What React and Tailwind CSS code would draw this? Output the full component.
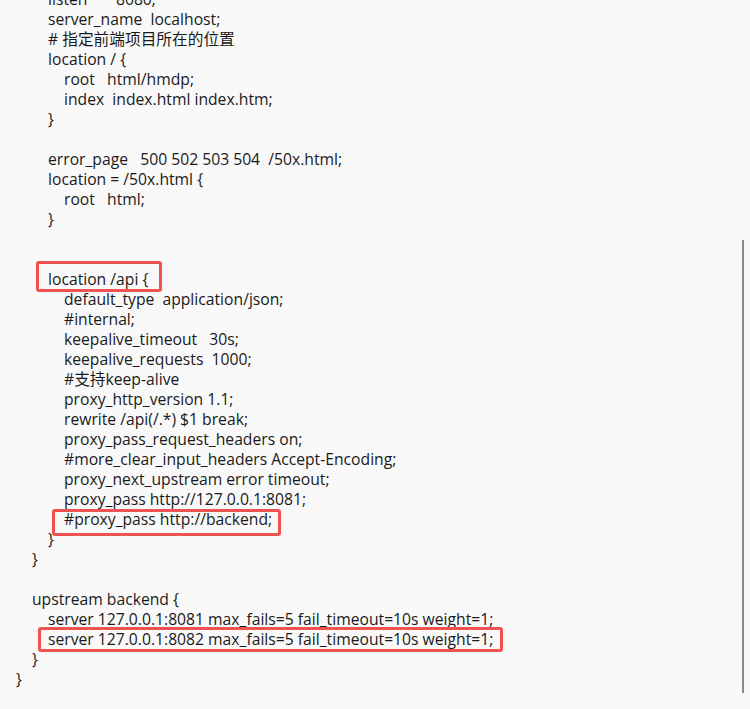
const lines = [
  [2, 'listen       8080;'],
  [2, 'server_name  localhost;'],
  [2, '# 指定前端项目所在的位置'],
  [2, 'location / {'],
  [3, 'root   html/hmdp;'],
  [3, 'index  index.html index.htm;'],
  [2, '}'],
  [2, ''],
  [2, 'error_page   500 502 503 504  /50x.html;'],
  [2, 'location = /50x.html {'],
  [3, 'root   html;'],
  [2, '}'],
  [2, ''],
  [2, ''],
  [2, 'location /api {', 'left-[-12px] top-[-7px] w-[126px] h-[31px]'],
  [3, 'default_type  application/json;'],
  [3, '#internal;'],
  [3, 'keepalive_timeout   30s;'],
  [3, 'keepalive_requests  1000;'],
  [3, '#支持keep-alive'],
  [3, 'proxy_http_version 1.1;'],
  [3, 'rewrite /api(/.*) $1 break;'],
  [3, 'proxy_pass_request_headers on;'],
  [3, '#more_clear_input_headers Accept-Encoding;'],
  [3, 'proxy_next_upstream error timeout;'],
  [3, 'proxy_pass http://127.0.0.1:8081;'],
  [3, '#proxy_pass http://backend;', 'left-[-12px] top-[1px] w-[229px] h-[27px]'],
  [2, '}'],
  [1, '}'],
  [1, ''],
  [1, 'upstream backend {'],
  [2, 'server 127.0.0.1:8081 max_fails=5 fail_timeout=10s weight=1;'],
  [2, 'server 127.0.0.1:8082 max_fails=5 fail_timeout=10s weight=1;', 'left-[-10px] top-[-1px] w-[465px] h-[25px]'],
  [1, '}'],
  [0, '}'],
]

const indent = ['pl-4', 'pl-8', 'pl-12', 'pl-16']

export default function App() {
  return (
    <div className="relative h-[709px] w-[750px] overflow-hidden bg-[#f9f9f9] text-[#1a1a1a]"
      style={{ fontFamily: '"Open Sans", "Noto Sans CJK SC", sans-serif' }}>
      <div className="-mt-[11px]">
        {lines.map(([lvl, text, box], i) => (
          <div key={i} className={`h-5 text-[15.7px] leading-5 whitespace-pre ${indent[lvl]}`}>
            <span className="relative">
              {text || ' '}
              {box && (
                <span className={`absolute rounded-[3px] border-[3px] border-[#f05252] ${box}`} />
              )}
            </span>
          </div>
        ))}
      </div>

      {/* scrollbar */}
      <div className="absolute left-[742px] top-[240px] h-[453px] w-[2px] bg-[#8a8a8a]" />
    </div>
  )
}
